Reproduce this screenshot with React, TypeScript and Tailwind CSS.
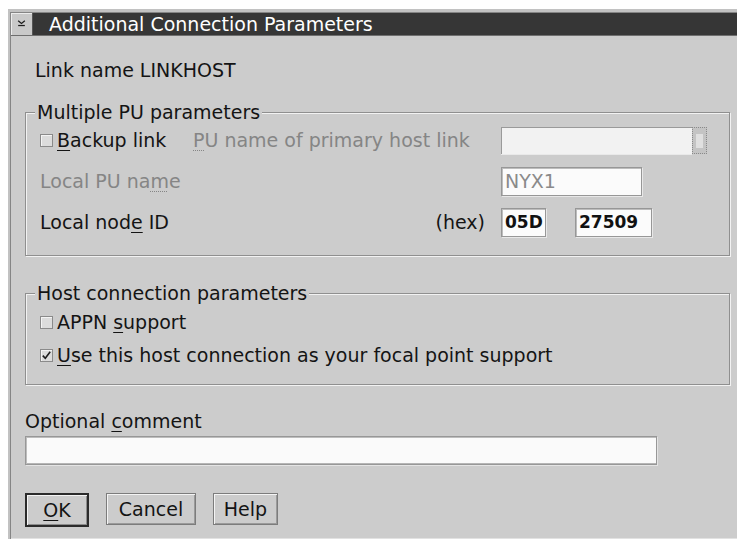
import React from "react";

function Mn({ children, dotted }: { children: React.ReactNode; dotted?: boolean }) {
  return (
    <span
      className={
        dotted
          ? "underline decoration-dotted decoration-1 underline-offset-[3px]"
          : "underline decoration-1 underline-offset-[3px]"
      }
    >
      {children}
    </span>
  );
}

function CheckBox({ checked }: { checked?: boolean }) {
  return (
    <span className="inline-flex h-[13px] w-[13px] shrink-0 items-center justify-center border border-[#8a8a8a] bg-[#dcdcdc] shadow-[inset_1px_1px_0_#f4f4f4]">
      {checked && (
        <svg width="11" height="11" viewBox="0 0 11 11">
          <polyline points="1.8,5.6 4.3,8.3 9.2,1.8" fill="none" stroke="#1e1e1e" strokeWidth="1.6" />
        </svg>
      )}
    </span>
  );
}

function Entry({ w, children, dim }: { w: string; children?: React.ReactNode; dim?: boolean }) {
  return (
    <div
      className={`${w} flex h-[29px] items-center border border-[#979797] bg-[#fbfbfb] pl-[3px] shadow-[1px_1px_0_#e8e8e8,inset_1px_1px_0_#bdbdbd] ${
        dim ? "text-[#8a8a8a]" : "text-[17px] font-bold text-[#111]"
      }`}
    >
      {children}
    </div>
  );
}

export default function App() {
  return (
    <div className="h-[539px] w-[737px] overflow-hidden bg-white pl-[8px] pt-[9px] font-['DejaVu_Sans',sans-serif] text-[19px] text-[#141414]">
      <div className="flex h-[530px] flex-col border-l-2 border-t-[3px] border-[#c2c2c2]">
        <div className="flex flex-1 flex-col border-l border-t border-[#858585] bg-[#cccccc]">
          {/* title bar */}
          <div className="flex h-[23px] border-b border-[#6e6e6e]">
            <div className="flex h-[22px] w-[22px] items-center justify-center border-r border-[#555] bg-[#c9c9c9] shadow-[inset_1px_1px_0_#ececec]">
              <svg width="22" height="22" viewBox="0 0 22 22">
                <polyline points="7.5,7.5 11,10.5 14.5,7.5" fill="none" stroke="#1e1e1e" strokeWidth="1.3" />
                <line x1="7.5" y1="12.6" x2="14.5" y2="12.6" stroke="#1e1e1e" strokeWidth="1.3" />
              </svg>
            </div>
            <div className="flex flex-1 items-center bg-[#363636] pl-[16px] text-[19px] leading-[22px] text-white">
              Additional Connection Parameters
            </div>
          </div>

          {/* dialog body */}
          <div className="flex flex-1 flex-col border-b border-[#e2e2e2] pl-[14px] pr-[7px] pt-[23px]">
            <div className="pl-[10px] leading-[22px]">Link name LINKHOST</div>

            <fieldset className="mt-[20px] border border-[#8f8f8f] pb-[18px] shadow-[1px_1px_0_#f2f2f2,inset_1px_1px_0_#f2f2f2]">
              <legend className="ml-[9px] bg-[#cccccc] px-[2px] leading-[22px]">Multiple PU parameters</legend>

              <div className="mt-[3px] flex h-[29px] items-center pl-[14px]">
                <div className="flex w-[461px] items-center">
                  <div className="flex w-[153px] items-center">
                    <CheckBox />
                    <span className="ml-[4px]">
                      <Mn>B</Mn>ackup link
                    </span>
                  </div>
                  <span className="text-[#858585]">
                    <Mn dotted>P</Mn>U name of primary host link
                  </span>
                </div>
                <div className="flex h-[27px]">
                  <div className="h-full w-[191px] border-t border-l border-[#9a9a9a] bg-[#f2f2f2] shadow-[0_1px_0_#e9e9e9]" />
                  <div className="flex h-full w-[15px] items-center justify-center border border-dotted border-[#8a8a8a] bg-[#c4c4c4]">
                    <div className="h-[14px] w-[7px] bg-[#e0e0e0]" />
                  </div>
                </div>
              </div>

              <div className="mt-[12px] flex h-[29px] items-center pl-[14px]">
                <div className="w-[461px] text-[#858585]">
                  Local PU na<Mn dotted>m</Mn>e
                </div>
                <Entry w="w-[141px]" dim>
                  NYX1
                </Entry>
              </div>

              <div className="mt-[12px] flex h-[29px] items-center pl-[14px]">
                <div className="flex w-[461px] items-center justify-between pr-[16px]">
                  <span>
                    Local nod<Mn>e</Mn> ID
                  </span>
                  <span>(hex)</span>
                </div>
                <Entry w="w-[45px]">05D</Entry>
                <div className="ml-[29px]">
                  <Entry w="w-[77px]">27509</Entry>
                </div>
              </div>
            </fieldset>

            <fieldset className="mt-[26px] border border-[#8f8f8f] pb-[16px] shadow-[1px_1px_0_#f2f2f2,inset_1px_1px_0_#f2f2f2]">
              <legend className="ml-[9px] bg-[#cccccc] px-[2px] leading-[22px]">Host connection parameters</legend>
              <div className="mt-[5px] flex h-[26px] items-center pl-[14px]">
                <CheckBox />
                <span className="ml-[4px]">
                  APPN <Mn>s</Mn>upport
                </span>
              </div>
              <div className="mt-[7px] flex h-[26px] items-center pl-[14px]">
                <CheckBox checked />
                <span className="ml-[4px]">
                  <Mn>U</Mn>se this host connection as your focal point support
                </span>
              </div>
            </fieldset>

            <div className="mt-[25px] leading-[22px]">
              Optional <Mn>c</Mn>omment
            </div>
            <div className="mt-[4px] h-[29px] w-[632px] border border-[#979797] bg-[#fafafa] shadow-[1px_1px_0_#e4e4e4,inset_1px_1px_0_#bdbdbd,inset_0_-1px_0_#b5b5b5]" />

            <div className="mt-[28px] flex items-start">
              <button className="flex h-[34px] w-[64px] items-center justify-center border-2 border-[#2b2b2b] bg-[#cccccc] shadow-[inset_1px_1px_0_#f4f4f4,inset_-1px_-1px_0_#8c8c8c]">
                <Mn>O</Mn>K
              </button>
              <button className="ml-[17px] flex h-[32px] w-[90px] items-center justify-center border border-[#7c7c7c] bg-[#cccccc] shadow-[inset_1px_1px_0_#f4f4f4,inset_-1px_-1px_0_#9a9a9a]">
                Cancel
              </button>
              <button className="ml-[17px] flex h-[32px] w-[65px] items-center justify-center border border-[#7c7c7c] bg-[#cccccc] shadow-[inset_1px_1px_0_#f4f4f4,inset_-1px_-1px_0_#9a9a9a]">
                Help
              </button>
            </div>
          </div>
        </div>
      </div>
    </div>
  );
}
